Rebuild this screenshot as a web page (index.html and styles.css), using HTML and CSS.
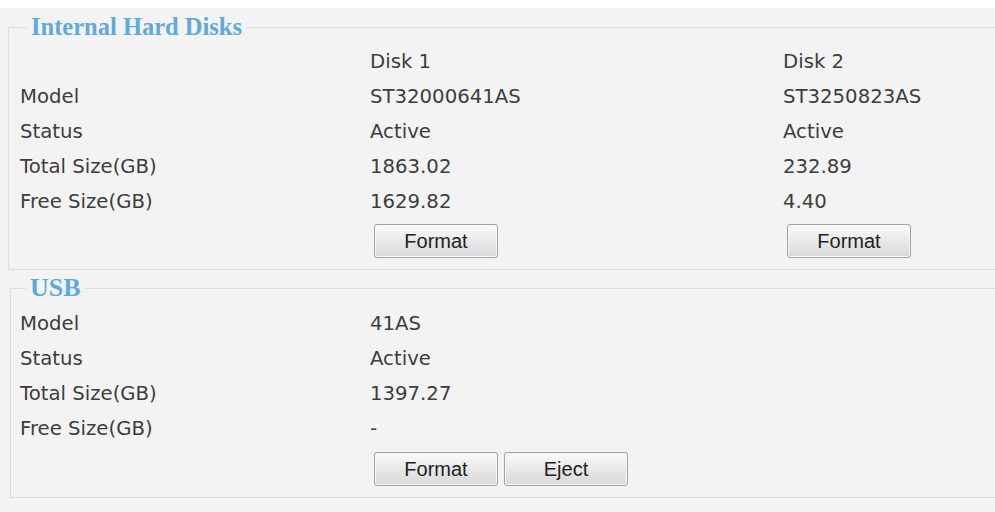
FILE: index.html
```html
<!DOCTYPE html>
<html lang="en">
<head>
    <meta charset="UTF-8">
    <meta name="viewport" content="width=device-width, initial-scale=1.0">
    <title>Storage</title>
    <link rel="stylesheet" href="styles.css">
</head>
<body>
    <div class="page">
        <fieldset class="disk-group">
            <legend>Internal Hard Disks</legend>
            <div class="disk-table two-disks">
                <div></div>
                <div>Disk 1</div>
                <div>Disk 2</div>

                <div>Model</div>
                <div>ST32000641AS</div>
                <div>ST3250823AS</div>

                <div>Status</div>
                <div>Active</div>
                <div>Active</div>

                <div>Total Size(GB)</div>
                <div>1863.02</div>
                <div>232.89</div>

                <div>Free Size(GB)</div>
                <div>1629.82</div>
                <div>4.40</div>

                <div class="btn-row"></div>
                <div class="btn-row"><button class="btn">Format</button></div>
                <div class="btn-row"><button class="btn">Format</button></div>
            </div>
        </fieldset>

        <fieldset class="disk-group usb">
            <legend>USB</legend>
            <div class="disk-table one-disk">
                <div>Model</div>
                <div>41AS</div>

                <div>Status</div>
                <div>Active</div>

                <div>Total Size(GB)</div>
                <div>1397.27</div>

                <div>Free Size(GB)</div>
                <div>-</div>

                <div class="btn-row"></div>
                <div class="btn-row">
                    <button class="btn">Format</button>
                    <button class="btn">Eject</button>
                </div>
            </div>
        </fieldset>
    </div>
</body>
</html>
```

FILE: styles.css
```css
body {
  margin:0;
  background:#fff;
  font-family:"DejaVu Sans", Verdana, sans-serif;
  font-size:19.7px;
  color:#3d3d3d;
}
.page {
  margin-top:8px;
  padding:5px 0 14px 8px;
  background:#f3f3f3;
}
.disk-group {
  margin:0;
  padding:0 0 11px 11px;
  border:1px solid #dedede;
  border-right:none;
}
.disk-group.usb {
  margin-top:4px;
  margin-left:2px;
  padding-left:9px;
}
.disk-group legend {
  padding:0 4px;
  margin-left:7px;
  font-family:"Liberation Serif", "Times New Roman", serif;
  font-weight:bold;
  font-size:24.5px;
  line-height:28px;
  color:#5eaade;
}
.usb legend {
  margin-left:6px;
  font-size:26px;
}
.disk-table {
  display:grid;
  margin-top:3px;
}
.disk-table > div {
  height:35px;
  line-height:35px;
  white-space:nowrap;
}
.two-disks {
  grid-template-columns:350px 413px 1fr;
}
.one-disk {
  grid-template-columns:350px 1fr;
  margin-top:4px;
}
.disk-table > div.btn-row {
  height:auto;
  line-height:normal;
  display:flex;
  gap:6px;
  padding:5px 0 0 4px;
}
.usb .disk-table > div.btn-row {
  padding-top:6px;
}
.btn {
  width:124px;
  height:34px;
  padding:0;
  font-family:"Liberation Sans", Arial, sans-serif;
  font-size:20px;
  color:#222;
  border:1px solid #a2a2a2;
  border-radius:3px;
  background:linear-gradient(#fbfbfb, #e8e8e8 50%, #d9d9d9);
  box-shadow:inset 0 0 0 1px #f7f7f7;
  cursor:pointer;
}
```
